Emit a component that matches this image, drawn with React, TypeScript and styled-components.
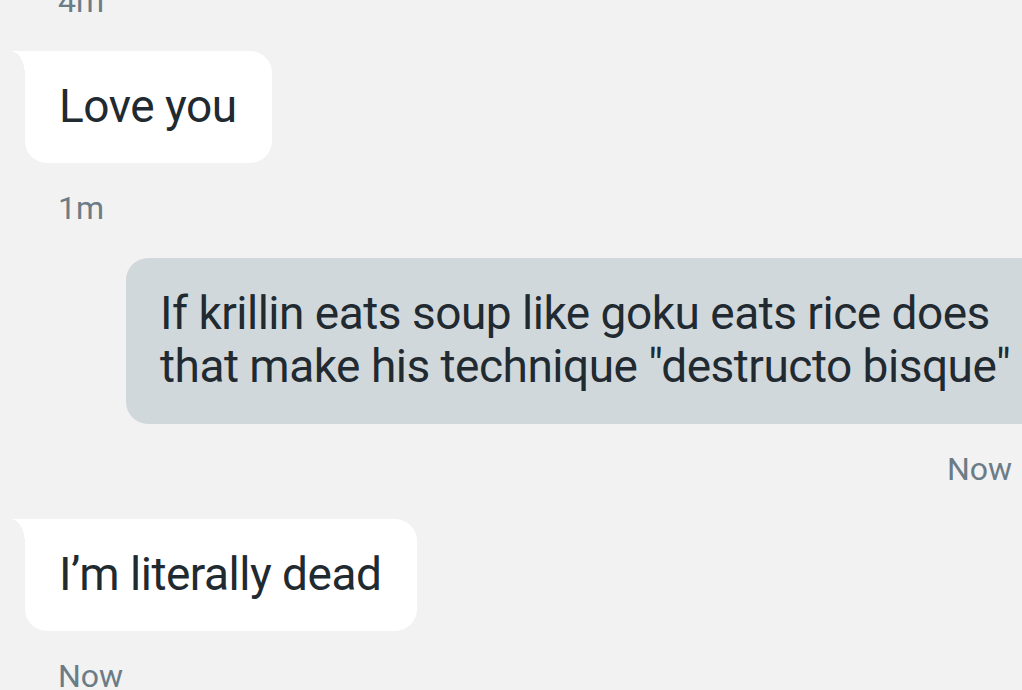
import React from "react";
import styled, { createGlobalStyle } from "styled-components";

const GlobalStyle = createGlobalStyle`
  html, body {
    margin: 0;
    padding: 0;
    background: #f2f2f2;
    overflow: hidden;
  }
  body {
    font-family: Roboto, "Noto Sans", "Liberation Sans", sans-serif;
    -webkit-font-smoothing: antialiased;
  }
`;

const Thread = styled.div`
  display: flex;
  flex-direction: column;
  width: 1022px;
  box-sizing: border-box;
  padding: 0 10px 0 25px;
  margin-top: -17px;
`;

const Timestamp = styled.div<{ $side: "left" | "right" }>`
  font-size: 32px;
  line-height: 37px;
  color: #6b7c87;
  align-self: ${(p) => (p.$side === "right" ? "flex-end" : "flex-start")};
  margin-left: ${(p) => (p.$side === "right" ? "0" : "33px")};
  margin-top: 27px;
  margin-bottom: 31px;
  white-space: nowrap;
  &:first-child {
    margin-top: 0;
  }
`;

const BubbleBase = styled.div`
  position: relative;
  align-self: flex-start;
  font-size: 46px;
  line-height: 53px;
  letter-spacing: -0.5px;
  color: #212a30;
  padding: 29px 36px 30px 34px;
  border-radius: 22px;
  white-space: nowrap;
`;

const ReceivedBubble = styled(BubbleBase)`
  background: #ffffff;
  border-top-left-radius: 0;
  &::before {
    content: "";
    position: absolute;
    left: -14px;
    top: 0;
    width: 14px;
    height: 24px;
    background: radial-gradient(
      100% 100% at 0 100%,
      transparent 98%,
      #ffffff 100%
    );
  }
`;

const SentBubble = styled(BubbleBase)`
  background: #d1d8dc;
  margin-left: 101px;
  padding-bottom: 31px;
`;

export default function App() {
  return (
    <>
      <GlobalStyle />
      <Thread>
        <Timestamp $side="left">4m</Timestamp>
        <ReceivedBubble>Love you</ReceivedBubble>
        <Timestamp $side="left">1m</Timestamp>
        <SentBubble>
          If krillin eats soup like goku eats rice does
          <br />
          that make his technique "destructo bisque"
        </SentBubble>
        <Timestamp $side="right">Now</Timestamp>
        <ReceivedBubble>I’m literally dead</ReceivedBubble>
        <Timestamp $side="left">Now</Timestamp>
      </Thread>
    </>
  );
}
